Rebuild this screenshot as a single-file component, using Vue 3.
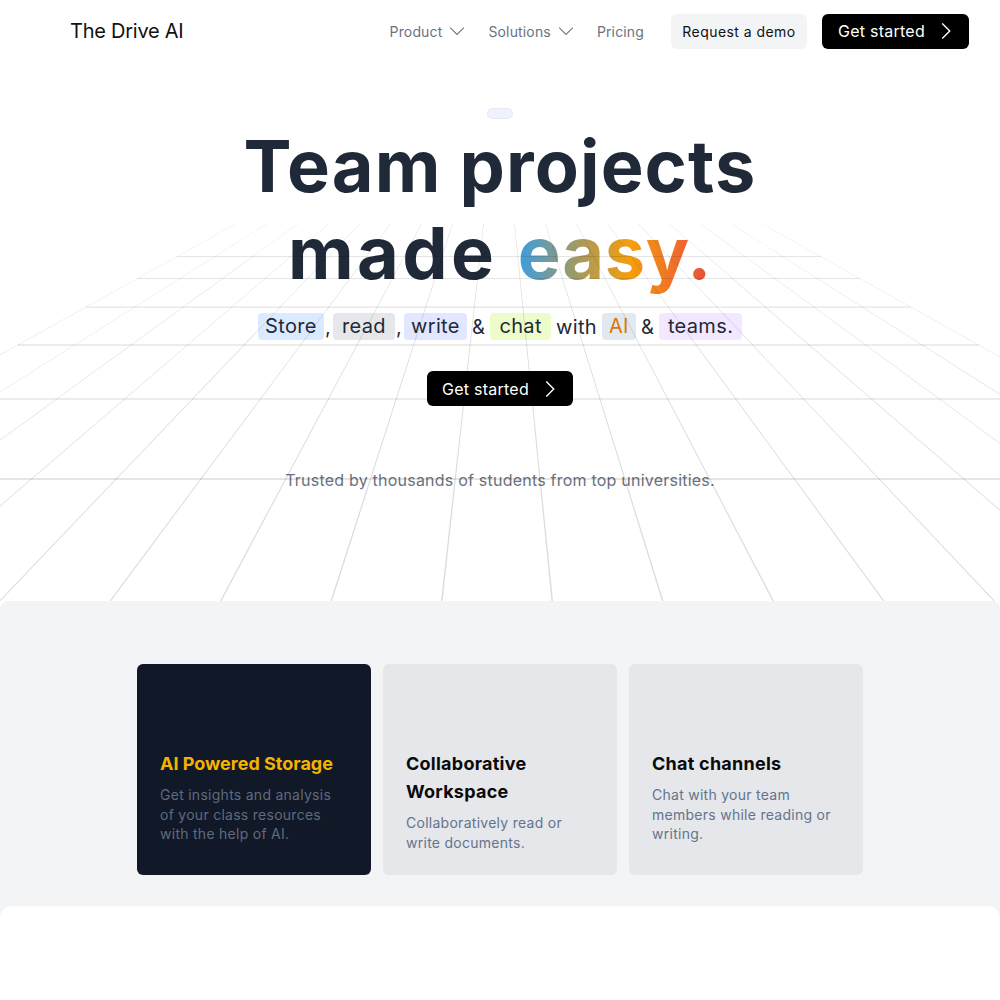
<template>
  <div class="page">
    <header class="nav">
      <div class="logo">The Drive AI</div>
      <nav class="links">
        <a class="link">Product
          <svg class="chev" viewBox="0 0 24 24"><path d="M19.5 8.25l-7.5 7.5-7.5-7.5" /></svg>
        </a>
        <a class="link">Solutions
          <svg class="chev" viewBox="0 0 24 24"><path d="M19.5 8.25l-7.5 7.5-7.5-7.5" /></svg>
        </a>
        <a class="link">Pricing</a>
      </nav>
      <button class="demo">Request a demo</button>
      <button class="cta">
        <span class="cta-text">Get started</span>
        <svg class="arrow" viewBox="0 0 24 24"><path d="M8.25 4.5l7.5 7.5-7.5 7.5" /></svg>
      </button>
    </header>

    <main class="hero">
      <div class="badge"></div>
      <h1 class="title">
        <span class="line-one">Team projects</span>
        <span class="line-two">made <span class="easy">easy.</span></span>
      </h1>
      <p class="sub">
        <span class="pill blue">Store</span><span class="sep">,</span>
        <span class="pill gray">read</span><span class="sep">,</span>
        <span class="pill indigo">write</span><span class="word">&amp;</span>
        <span class="pill lime">chat</span><span class="word">with</span>
        <span class="pill slate"><span class="ai">AI</span></span><span class="word">&amp;</span>
        <span class="pill purple">teams.</span>
      </p>
      <button class="cta hero-cta">
        <span class="cta-text">Get started</span>
        <svg class="arrow" viewBox="0 0 24 24"><path d="M8.25 4.5l7.5 7.5-7.5 7.5" /></svg>
      </button>
      <p class="trusted">Trusted by thousands of students from top universities.</p>

      <!-- perspective floor, sits over the text like the original -->
      <svg class="floor" viewBox="0 0 1000 601" width="1000" height="601">
        <polygon v-for="(p, i) in rails" :key="'r' + i" :points="p" class="rail" />
        <line
          v-for="(r, i) in rungs"
          :key="'h' + i"
          :x1="r.x1"
          :x2="r.x2"
          :y1="r.y"
          :y2="r.y"
          :stroke-width="r.w"
          class="rung"
        />
      </svg>
    </main>

    <section class="features">
      <div class="cards">
        <article v-for="card in cards" :key="card.title" class="card" :class="{ dark: card.dark }">
          <h3>{{ card.title }}</h3>
          <p>{{ card.text }}</p>
        </article>
      </div>
      <div class="panel"></div>
    </section>
  </div>
</template>

<script setup>
const VY = 77
const BOTTOM = 601
const TOP = 224
const CELL = 110.5
const RUNG_Y = [479, 399, 345, 307, 278.5, 256.5]

const cards = [
  { title: 'AI Powered Storage', text: 'Get insights and analysis of your class resources with the help of AI.', dark: true },
  { title: 'Collaborative Workspace', text: 'Collaboratively read or write documents.' },
  { title: 'Chat channels', text: 'Chat with your team members while reading or writing.' }
]

// x of a floor line (k cells from centre) at screen height y
function railX(k, y) {
  const centre = 497 + (BOTTOM - y) * 2 / (BOTTOM - TOP)
  return centre + k * CELL * (y - VY) / (BOTTOM - VY)
}

const rails = []
for (let k = -8.5; k <= 8.5; k++) {
  const wb = 1.5
  const wt = 0.5
  rails.push([
    `${(railX(k, TOP) - wt / 2).toFixed(2)},${TOP}`,
    `${(railX(k, TOP) + wt / 2).toFixed(2)},${TOP}`,
    `${(railX(k, BOTTOM) + wb / 2).toFixed(2)},${BOTTOM}`,
    `${(railX(k, BOTTOM) - wb / 2).toFixed(2)},${BOTTOM}`
  ].join(' '))
}

const rungs = RUNG_Y.map((y) => ({
  y,
  x1: railX(-8.5, y).toFixed(1),
  x2: railX(8.5, y).toFixed(1),
  w: (2.4 * (y - VY) / (BOTTOM - VY) + 0.2).toFixed(2)
}))
</script>

<style>
html, body {
  margin: 0;
  background: #fff;
}
</style>

<style scoped>
.page {
  width: 1000px;
  height: 1000px;
  overflow: hidden;
  font-family: Inter, "Liberation Sans", sans-serif;
  background: #fff;
}

.nav {
  display: flex;
  align-items: center;
  height: 62px;
  padding: 0 31px 0 70px;
  box-sizing: border-box;
}

.logo {
  font-size: 20px;
  color: #111;
  flex: 1;
  letter-spacing: -0.25px;
}

.links {
  display: flex;
  align-items: center;
  gap: 20px;
  margin-right: 27px;
}

.link {
  display: flex;
  align-items: center;
  gap: 4px;
  font-size: 14px;
  color: #6b7280;
  letter-spacing: 0.15px;
}

.chev {
  width: 22px;
  height: 22px;
  fill: none;
  stroke: #6b7280;
  stroke-width: 1.1;
}

.demo {
  width: 136px;
  height: 35px;
  margin-right: 15px;
  border: 0;
  border-radius: 6px;
  background: #f3f4f6;
  color: #111;
  font: 14px Inter, sans-serif;
  letter-spacing: 0.45px;
}

.cta {
  display: flex;
  align-items: center;
  gap: 8px;
  width: 147px;
  height: 35px;
  padding: 0 11px 0 16px;
  box-sizing: border-box;
  border: 0;
  border-radius: 6px;
  background: #000;
  color: #fff;
  font: 16px Inter, sans-serif;
}

.cta-text {
  width: 88px;
  white-space: nowrap;
  text-align: left;
  letter-spacing: 0.25px;
}

.arrow {
  width: 24px;
  height: 24px;
  fill: none;
  stroke: #fff;
  stroke-width: 1.4;
}

.hero {
  position: relative;
  height: 539px;
  display: flex;
  flex-direction: column;
  align-items: center;
}

.badge {
  width: 26px;
  height: 11px;
  margin-top: 46px;
  box-sizing: border-box;
  border: 1px solid #e5e9f5;
  border-radius: 6px;
  background: #eff2fc;
}

.title {
  display: flex;
  flex-direction: column;
  align-items: center;
  margin: 4px 0 0;
  font-size: 72px;
  line-height: 86.5px;
  font-weight: 700;
  color: #1f2937;
  letter-spacing: 1.1px;
}

.line-two {
  letter-spacing: 3.4px;
}

.easy {
  letter-spacing: 0.8px;
  background: linear-gradient(90deg, #3b9de0 0%, #a89a5c 32%, #f59e0b 58%, #ee6d2c 82%, #e94b3c 100%);
  -webkit-background-clip: text;
  background-clip: text;
  color: transparent;
}

.sub {
  display: flex;
  align-items: center;
  height: 27px;
  margin: 17px 0 0;
  font-size: 20px;
  color: #1f2937;
  white-space: nowrap;
}

.pill {
  height: 27px;
  line-height: 27px;
  border-radius: 4px;
  text-align: center;
  letter-spacing: 0.35px;
}

.sep { width: 8px; padding-left: 1px; }
.word { margin: 0 5px; letter-spacing: 0.3px; }
.blue { width: 66px; background: #dbeafe; }
.gray { width: 62px; background: #e5e7eb; }
.indigo { width: 63px; background: #e0e7ff; }
.lime { width: 61px; background: #ecfccb; }
.slate { width: 34px; background: #e2e8f0; }
.purple { width: 83px; background: #f3e8ff; }
.ai { color: #d97706; }

.hero-cta {
  position: relative;
  z-index: 2;
  width: 146px;
  margin-top: 31px;
  padding-left: 15px;
}

.trusted {
  margin: 64px 0 0;
  font-size: 16px;
  line-height: 20px;
  color: #6b7280;
  letter-spacing: 0.22px;
  white-space: nowrap;
}

.floor {
  position: absolute;
  left: 0;
  top: -62px;
  z-index: 1;
  pointer-events: none;
}

.rail {
  fill: rgba(0, 0, 0, 0.14);
}

.rung {
  stroke: rgba(0, 0, 0, 0.1);
}

.features {
  height: 399px;
  padding-top: 63px;
  box-sizing: border-box;
  background: #f3f4f6;
  border-radius: 8px 8px 0 0;
  position: relative;
}

.cards {
  display: grid;
  grid-template-columns: repeat(3, 234px);
  gap: 12px;
  justify-content: center;
}

.card {
  height: 211px;
  padding: 86px 23px 0;
  box-sizing: border-box;
  border-radius: 6px;
  background: #e5e7eb;
}

.card h3 {
  margin: 0;
  font-size: 18px;
  line-height: 28px;
  font-weight: 700;
  color: #0a0a0a;
  letter-spacing: 0.25px;
}

.card p {
  margin: 7px 0 0;
  font-size: 14px;
  line-height: 19.5px;
  color: #64748b;
  letter-spacing: 0.27px;
}

.card.dark {
  background: #111827;
}

.card.dark h3 {
  color: #f5b301;
  letter-spacing: 0;
}

.card.dark p {
  color: #5f6b7e;
}

.panel {
  height: 100px;
  margin-top: 31px;
  background: #fff;
  border-radius: 12px 12px 0 0;
}
</style>
